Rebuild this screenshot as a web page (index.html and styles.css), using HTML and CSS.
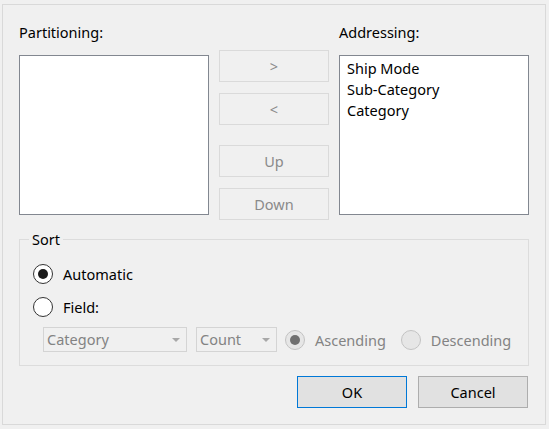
FILE: index.html
```html
<!DOCTYPE html>
<html>
<head>
<meta charset="utf-8">
<link rel="stylesheet" href="styles.css">
</head>
<body>
<div class="dialog">
  <div class="lists">
    <div class="col">
      <div class="label">Partitioning:</div>
      <div class="listbox"></div>
    </div>
    <div class="col mid">
      <button class="btn dis b1">&gt;</button>
      <button class="btn dis b2">&lt;</button>
      <button class="btn dis b3">Up</button>
      <button class="btn dis b4">Down</button>
    </div>
    <div class="col">
      <div class="label">Addressing:</div>
      <div class="listbox">
        <div class="item">Ship Mode</div>
        <div class="item">Sub-Category</div>
        <div class="item">Category</div>
      </div>
    </div>
  </div>
  <fieldset class="sort">
    <legend>Sort</legend>
    <div class="radio-row">
      <span class="radio on"></span><span class="rlabel">Automatic</span>
    </div>
    <div class="radio-row second">
      <span class="radio"></span><span class="rlabel">Field:</span>
    </div>
    <div class="field-row">
      <div class="combo wide"><span>Category</span><span class="arrow"></span></div>
      <div class="combo narrow"><span>Count</span><span class="arrow"></span></div>
      <span class="radio dis on"></span><span class="rlabel dtext">Ascending</span>
      <span class="radio dis desc"></span><span class="rlabel dtext">Descending</span>
    </div>
  </fieldset>
  <div class="actions">
    <button class="btn ok">OK</button>
    <button class="btn cancel">Cancel</button>
  </div>
</div>
</body>
</html>
```
FILE: styles.css
```css
html, body {
  margin: 0;
  padding: 0;
  background: #f0f0f0;
}
body {
  font-family: "Noto Sans", "Open Sans", sans-serif;
  font-size: 14.5px;
  color: #000;
}
.dialog {
  box-sizing: border-box;
  width: 544px;
  height: 421px;
  margin: 4px 0 0 2px;
  border: 1px solid #d9d9d9;
  padding: 17px 16px 0 16px;
}
.lists {
  display: flex;
  gap: 10px;
  align-items: flex-start;
}
.col {
  display: flex;
  flex-direction: column;
}
.label {
  height: 20px;
  line-height: 20px;
  margin-bottom: 13px;
}
.listbox {
  box-sizing: border-box;
  width: 190px;
  height: 160px;
  background: #fff;
  border: 1px solid #828790;
  padding: 2px 7px;
}
.item {
  line-height: 21px;
  height: 21px;
}
.mid {
  padding-top: 28px;
  width: 110px;
}
.btn {
  box-sizing: border-box;
  width: 110px;
  height: 32px;
  font: inherit;
  padding: 0;
  margin: 0;
  line-height: 28px;
}
.dis {
  background: #f0f0f0;
  border: 1px solid #dadada;
  color: #8a8a8a;
}
.b2 { margin-top: 11px; }
.b3 { margin-top: 20px; }
.b4 { margin-top: 11px; }
.sort {
  box-sizing: border-box;
  width: 510px;
  margin: 9px 0 0 0;
  padding: 0 12px 13px 13px;
  border: 1px solid #dcdcdc;
  min-width: 0;
}
.sort legend {
  margin-left: -4px;
  padding: 0 3px 0 3px;
  line-height: 20px;
  height: 20px;
}
.radio-row {
  display: flex;
  align-items: center;
  height: 20px;
  margin-top: 15px;
}
.radio-row.second {
  margin-top: 13px;
}
.radio {
  box-sizing: border-box;
  width: 20px;
  height: 20px;
  border-radius: 50%;
  border: 1px solid #333;
  background: #fff;
  flex: none;
  display: flex;
  align-items: center;
  justify-content: center;
}
.radio.on::after {
  content: "";
  width: 10px;
  height: 10px;
  border-radius: 50%;
  background: #1a1a1a;
}
.radio.dis {
  background: #e6e6e6;
  border-color: #c3c3c3;
}
.radio.dis.on::after {
  background: #707070;
}
.rlabel {
  margin-left: 10px;
  line-height: 20px;
}
.dtext {
  color: #838383;
}
.field-row {
  display: flex;
  align-items: center;
  margin-top: 10px;
  padding-left: 10px;
  height: 25px;
}
.combo {
  box-sizing: border-box;
  height: 25px;
  border: 1px solid #d4d4d4;
  background: #f0f0f0;
  color: #838383;
  display: flex;
  align-items: center;
  justify-content: space-between;
  padding: 0 6px 0 3px;
  line-height: 23px;
}
.combo.wide {
  width: 144px;
}
.combo.narrow {
  width: 81px;
  margin-left: 9px;
  margin-right: 8px;
}
.arrow {
  width: 0;
  height: 0;
  border-left: 4px solid transparent;
  border-right: 4px solid transparent;
  border-top: 4px solid #a8a8a8;
}
.radio.desc {
  margin-left: 15px;
}
.actions {
  display: flex;
  justify-content: flex-end;
  gap: 11px;
  margin-top: 10px;
  padding-right: 1px;
}
.ok {
  background: #e1e1e1;
  border: 1px solid #0078d7;
  color: #000;
}
.cancel {
  background: #e1e1e1;
  border: 1px solid #adadad;
  color: #000;
}
```
